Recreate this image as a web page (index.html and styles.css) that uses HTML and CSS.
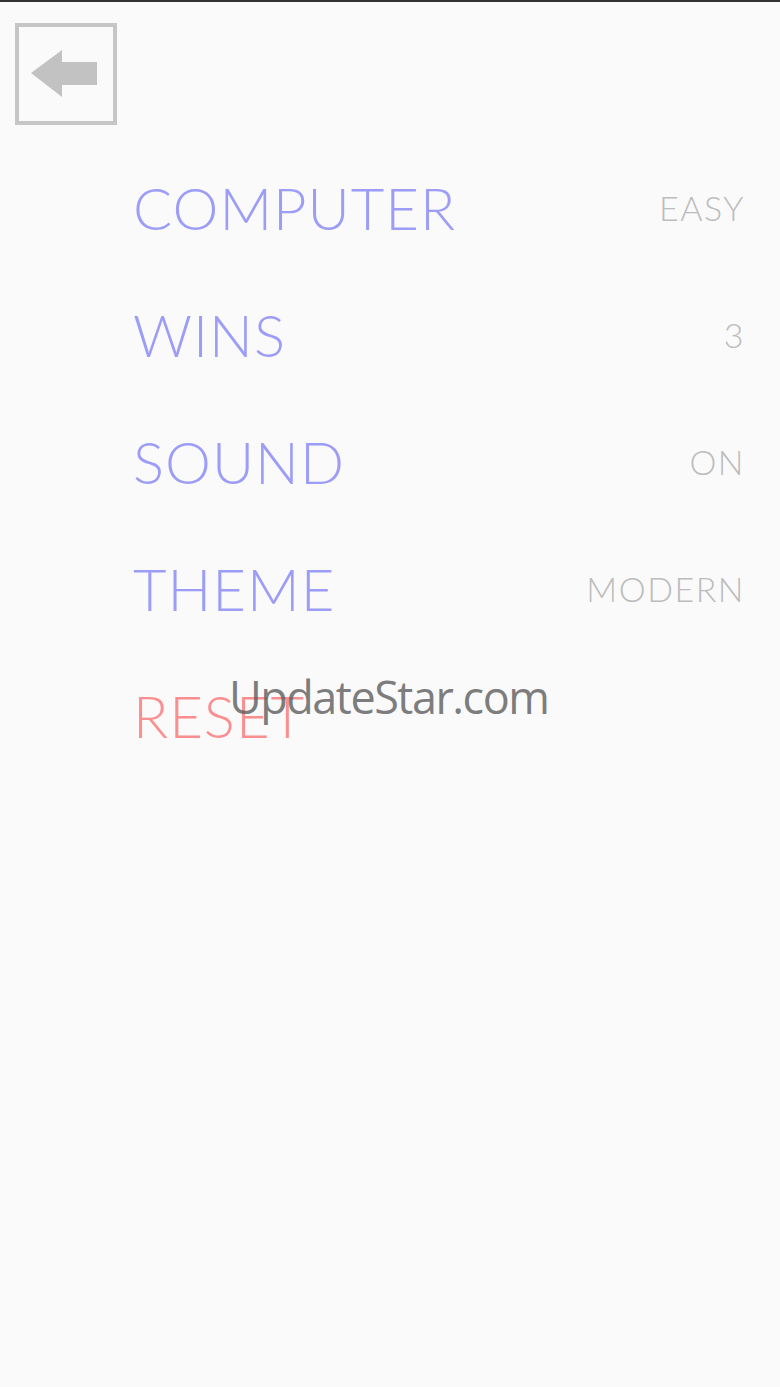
FILE: index.html
```html
<!DOCTYPE html>
<html lang="en">
<head>
  <meta charset="UTF-8">
  <title>Settings</title>
  <meta name="viewport" content="width=device-width, initial-scale=1.0">
  <link rel="stylesheet" href="styles.css">
</head>
<body>
  <header class="top">
    <!-- back to the game board -->
    <button class="back" type="button" aria-label="Back">
      <svg width="66" height="48" viewBox="0 0 66 48">
        <polygon points="0,23 31,0 31,12 66,12 66,35 31,35 31,47" fill="#c2c2c2"/>
      </svg>
    </button>
  </header>

  <ul class="settings">
    <li class="row"><span class="name">COMPUTER</span><span class="value">EASY</span></li>
    <li class="row"><span class="name">WINS</span><span class="value">3</span></li>
    <li class="row"><span class="name">SOUND</span><span class="value">ON</span></li>
    <li class="row"><span class="name">THEME</span><span class="value">MODERN</span></li>
    <li class="row"><span class="name danger">RESET</span></li>
  </ul>

  <div class="stamp">UpdateStar.com</div>
</body>
</html>
```

FILE: styles.css
```css
html, body {
  margin: 0;
  height: 100%;
}
body {
  background: #fafafa;
  border-top: 2px solid #333;
  box-sizing: border-box;
  font-family: 'Lato', sans-serif;
  position: relative;
}
.top {
  padding: 21px 0 0 15px;
}
.back {
  width: 102px;
  height: 102px;
  border: 4px solid #c6c6c6;
  background: transparent;
  padding: 0 0 0 12px;
  display: flex;
  align-items: center;
  cursor: pointer;
  box-sizing: border-box;
}
.settings {
  list-style: none;
  margin: 19px 0 0;
  padding: 0 35px 0 133px;
}
.row {
  display: flex;
  justify-content: space-between;
  align-items: center;
  height: 127px;
  line-height: 70px;
}
.name {
  font-size: 58px;
  font-weight: 300;
  letter-spacing: 1px;
  color: #9d9df7;
}
.name.danger {
  color: #fb8f8f;
}
.value {
  font-size: 34px;
  font-weight: 300;
  letter-spacing: 1.5px;
  color: #bcbcbc;
}
.stamp {
  position: absolute;
  left: 229px;
  top: 672px;
  font-family: 'Open Sans', sans-serif;
  font-size: 45px;
  line-height: 1;
  letter-spacing: -1.5px;
  color: rgba(90, 90, 90, 0.8);
}
```
